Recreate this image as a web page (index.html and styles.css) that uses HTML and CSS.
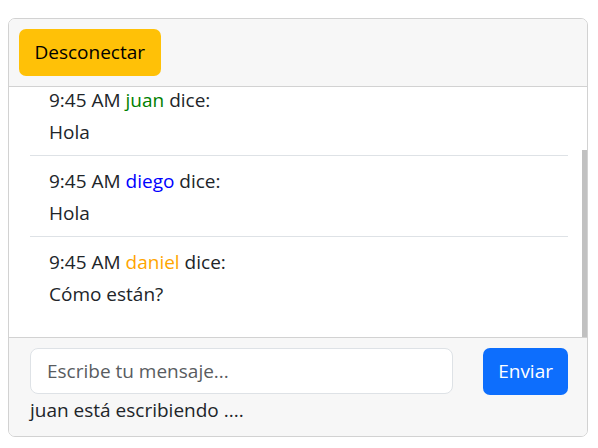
FILE: index.html
```html
<!DOCTYPE html>
<html lang="es">
<head>
<meta charset="utf-8">
<title>Chat</title>
<link rel="stylesheet" href="styles.css">
</head>
<body>
<div class="card">
  <div class="card-header">
    <button class="btn btn-warning" type="button">Desconectar</button>
  </div>
  <div class="messages-wrap">
    <ul class="messages" id="messages">
      <li class="message">
        <div>9:45 AM <span class="user-juan">juan</span> dice:</div>
        <div>Hola</div>
      </li>
      <li class="message">
        <div>9:45 AM <span class="user-diego">diego</span> dice:</div>
        <div>Hola</div>
      </li>
      <li class="message">
        <div>9:45 AM <span class="user-daniel">daniel</span> dice:</div>
        <div>Cómo están?</div>
      </li>
    </ul>
    <div class="scroll-thumb"></div>
  </div>
  <div class="card-footer">
    <form class="send-row">
      <input class="form-control" type="text" placeholder="Escribe tu mensaje...">
      <button class="btn btn-primary" type="button">Enviar</button>
    </form>
    <div class="typing">juan está escribiendo ....</div>
  </div>
</div>
<script src="script.js"></script>
</body>
</html>
```

FILE: styles.css
```css
* { box-sizing: border-box; }

body {
  margin: 8px;
  font-family: "Open Sans", "Noto Sans", sans-serif;
  font-size: 19px;
  color: #212529;
  background: #fff;
}

.card {
  width: 580px;
  margin-top: 10px;
  border: 1px solid #d2d2d2;
  border-radius: 7px;
  overflow: hidden;
  background: #fff;
}

.card-header {
  background: #f7f7f7;
  border-bottom: 1px solid #d2d2d2;
  padding: 10px;
  display: flex;
}

.btn {
  font: inherit;
  height: 47px;
  border: none;
  border-radius: 7px;
  cursor: pointer;
  line-height: 47px;
}

.btn-warning {
  padding: 0 15.5px;
  background: #ffc107;
  color: #000;
}

.btn-primary {
  padding: 0 15px;
  background: #0d6efd;
  color: #fff;
}

.messages-wrap {
  position: relative;
}

.messages {
  list-style: none;
  margin: 0;
  padding: 72px 19px 20px 21px;
  height: 250px;
  overflow-y: auto;
  scrollbar-width: none;
}

.messages::-webkit-scrollbar { display: none; }

.scroll-thumb {
  position: absolute;
  right: 0;
  bottom: 0;
  width: 5px;
  height: 187px;
  background: #c1c1c1;
}

.message {
  padding: 9px 0 7px 19px;
  line-height: 32px;
  border-bottom: 1px solid #dee2e6;
}

.message:last-child { border-bottom: none; }

.user-juan { color: #008000; }
.user-diego { color: #0000ff; }
.user-daniel { color: #ffa500; }

.card-footer {
  background: #f7f7f7;
  border-top: 1px solid #d2d2d2;
  padding: 10px 19px 11px 21px;
}

.send-row {
  display: flex;
  gap: 30px;
  margin: 0;
}

.form-control {
  flex: 1;
  min-width: 0;
  height: 46px;
  padding: 0 16px;
  font: inherit;
  color: #212529;
  background: #fff;
  border: 1px solid #dee2e6;
  border-radius: 8px;
  outline: none;
}

.form-control::placeholder { color: #595c5f; }

.typing { line-height: 30px; }
```

FILE: script.js
```js
var list = document.getElementById('messages');
list.scrollTop = list.scrollHeight;
```
